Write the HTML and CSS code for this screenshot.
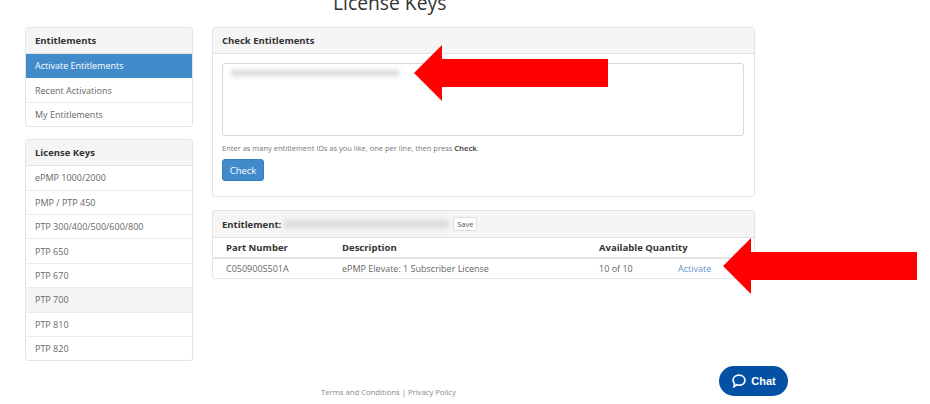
FILE: index.html
```html
<!DOCTYPE html>
<html>
<head>
    <meta charset="UTF-8">
    <link rel="stylesheet" href="styles.css">
</head>
<body>
    <h1 class="page-title">License Keys</h1>

    <div class="layout">
        <div class="sidebar">
            <div class="panel">
                <div class="panel-heading">Entitlements</div>
                <a class="list-item active">Activate Entitlements</a>
                <a class="list-item">Recent Activations</a>
                <a class="list-item">My Entitlements</a>
            </div>
            <div class="panel">
                <div class="panel-heading">License Keys</div>
                <a class="list-item">ePMP 1000/2000</a>
                <a class="list-item">PMP / PTP 450</a>
                <a class="list-item">PTP 300/400/500/600/800</a>
                <a class="list-item">PTP 650</a>
                <a class="list-item">PTP 670</a>
                <a class="list-item hover">PTP 700</a>
                <a class="list-item">PTP 810</a>
                <a class="list-item">PTP 820</a>
            </div>
        </div>

        <div class="content">
            <div class="panel">
                <div class="panel-heading">Check Entitlements</div>
                <div class="panel-body">
                    <div class="textarea">
                        <span class="blurred blurred-input"></span>
                    </div>
                    <p class="help-text">Enter as many entitlement IDs as you like, one per line, then press <b>Check</b>.</p>
                    <button class="button">Check</button>
                </div>
            </div>

            <div class="panel">
                <div class="panel-heading entitlement-heading">
                    <span>Entitlement:</span>
                    <span class="blurred blurred-id"></span>
                    <button class="save-button">Save</button>
                </div>
                <table class="table">
                    <thead>
                        <tr>
                            <th class="col-part">Part Number</th>
                            <th class="col-desc">Description</th>
                            <th class="col-qty">Available Quantity</th>
                            <th></th>
                        </tr>
                    </thead>
                    <tbody>
                        <tr>
                            <td>C050900S501A</td>
                            <td>ePMP Elevate: 1 Subscriber License</td>
                            <td>10 of 10</td>
                            <td><a class="link">Activate</a></td>
                        </tr>
                    </tbody>
                </table>
            </div>
        </div>
    </div>

    <div class="footer">Terms and Conditions | Privacy Policy</div>

    <!-- annotation arrows drawn over the page -->
    <svg class="arrow arrow-top" width="194" height="56" viewBox="0 0 194 56">
        <polygon points="0,28 28,0 28,14 194,14 194,42 28,42 28,56" fill="#ff0000"/>
    </svg>
    <svg class="arrow arrow-bottom" width="194" height="56" viewBox="0 0 194 56">
        <polygon points="0,28 28,0 28,14 194,14 194,42 28,42 28,56" fill="#ff0000"/>
    </svg>

    <div class="chat-button">
        <svg width="16" height="16" viewBox="0 0 16 16">
            <path d="M8 2.2c3.4 0 5.9 2.2 5.9 5s-2.5 5-5.900 5c-.8 0-1.500-.1-2.200-.4L3 13.600l.5-3C2.600 9.700 2.100 8.500 2.100 7.200c0-2.800 2.500-5 5.900-5z" fill="none" stroke="#ffffff" stroke-width="1.700"/>
        </svg>
        <span>Chat</span>
    </div>
</body>
</html>
```

FILE: styles.css
```css
html, body {
    height: 404px;
    overflow: hidden;
}

body {
    margin: 0;
    background-color: #ffffff;
    font-family: "Open Sans", "Liberation Sans", sans-serif;
    font-size: 9px;
    color: #666666;
}

.page-title {
    margin: -10px 0 0 333px;
    height: 37px;
    font-size: 19.300px;
    line-height: 26px;
    font-weight: 400;
    color: #333333;
}

.layout {
    display: flex;
    gap: 19px;
    padding-left: 25px;
    align-items: flex-start;
}

.sidebar {
    display: flex;
    flex-direction: column;
    gap: 12px;
    width: 168px;
}

.content {
    display: flex;
    flex-direction: column;
    gap: 13px;
    width: 543px;
}

/* Panels */
.panel {
    background: #ffffff;
    border: 1px solid #e4e4e4;
    border-radius: 3px;
    overflow: hidden;
}

.panel-heading {
    height: 25px;
    padding: 0 9px;
    display: flex;
    align-items: center;
    background-color: #f5f5f5;
    border-bottom: 1px solid #e4e4e4;
    font-size: 9.500px;
    font-weight: 700;
    color: #333333;
}

.panel-body {
    padding: 9px 10px 15px 9px;
}

/* List group */
.list-item {
    display: flex;
    align-items: center;
    height: 23.400px;
    padding: 0 9px;
    border-bottom: 1px solid #ececec;
    color: #666666;
}

.list-item:last-child {
    border-bottom: none;
}

.list-item.active {
    background-color: #428bca;
    border-bottom-color: #428bca;
    color: #ffffff;
}

.list-item.hover {
    background-color: #f5f5f5;
}

/* Check form */
.textarea {
    box-sizing: border-box;
    height: 73px;
    border: 1px solid #d8d8d8;
    border-radius: 3px;
    padding: 5px 8px;
}

.blurred {
    display: block;
    background-color: #d8d8d8;
    filter: blur(2.500px);
}

.blurred-input {
    width: 168px;
    height: 6px;
    margin-top: 1px;
}

.blurred-id {
    width: 165px;
    height: 8px;
    margin: 0 4px 0 3px;
    background-color: #dcdcdc;
}

.help-text {
    margin: 6px 0 0;
    font-size: 7.500px;
    line-height: 12px;
    color: #777777;
}

.help-text b {
    color: #555555;
}

.button {
    display: block;
    margin-top: 5px;
    width: 42px;
    height: 22px;
    padding: 0;
    background-color: #428bca;
    border: 1px solid #357ebd;
    border-radius: 3px;
    font-family: inherit;
    font-size: 9.500px;
    color: #ffffff;
}

.entitlement-heading {
    height: 26px;
}

.save-button {
    height: 14px;
    width: 24px;
    padding: 0;
    background: #ffffff;
    border: 1px solid #dddddd;
    border-radius: 2px;
    font-family: inherit;
    font-size: 7.500px;
    color: #555555;
}

/* Results table */
.table {
    width: 100%;
    table-layout: fixed;
    border-collapse: collapse;
}

.table th {
    box-sizing: border-box;
    height: 20px;
    padding: 0 0 0 13px;
    text-align: left;
    font-size: 9.500px;
    font-weight: 700;
    white-space: nowrap;
    color: #333333;
    border-bottom: 2px solid #e4e4e4;
}

.table td {
    height: 19px;
    padding: 0 0 0 13px;
    color: #666666;
}

.col-part {
    width: 116px;
}

.col-desc {
    width: 257px;
}

.col-qty {
    width: 79px;
}

.link {
    color: #5f93cb;
}

.footer {
    position: absolute;
    left: 321px;
    top: 386px;
    font-size: 7.700px;
    line-height: 12px;
    color: #888888;
}

/* Overlays */
.arrow {
    position: absolute;
}

.arrow-top {
    left: 414px;
    top: 45px;
}

.arrow-bottom {
    left: 723px;
    top: 238px;
}

.chat-button {
    position: absolute;
    left: 719px;
    top: 366px;
    width: 69px;
    height: 30px;
    display: flex;
    align-items: center;
    justify-content: center;
    gap: 4px;
    border-radius: 15px;
    background-color: #0450a4;
    color: #ffffff;
    font-family: "Liberation Sans", sans-serif;
    font-size: 11px;
    font-weight: 700;
}
```
